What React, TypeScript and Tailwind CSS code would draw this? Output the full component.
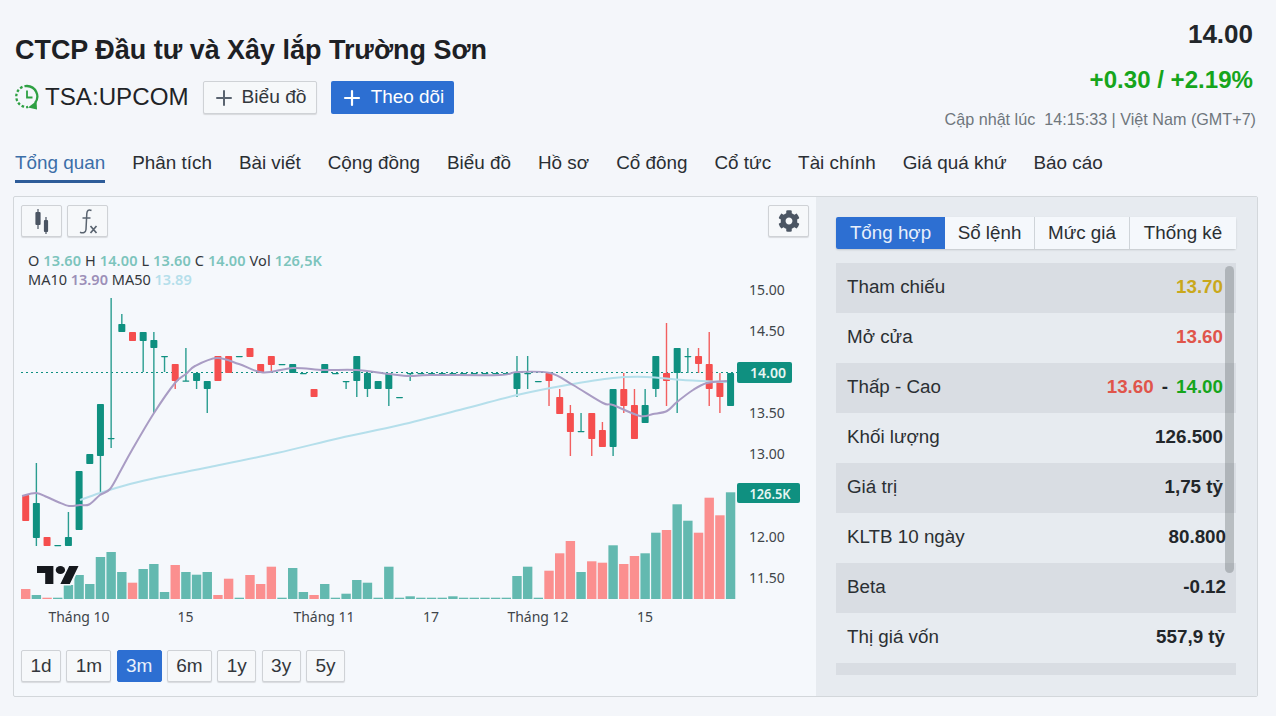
import { Plus } from "lucide-react";
import { FaCog } from "react-icons/fa";

type C = [string, number, number, number, number];
const G = "g", R = "r";
// colour, wick top, wick bottom, body top, body bottom (page px)
const candles: C[] = [
  [R,495,521,495,521],[G,463,546,503,538],[R,537,546,537,546],[G,545,545,545,545.5],[G,512,546,537,546],
  [G,471,530,471,530],[G,454,464,454,464],[G,404,495,404,456],[G,298,448,438,438.5],[G,314,332,324,332],
  [R,332,341,332,341],[G,332,372,332,341],[G,332,413,340,348],[G,356,372,356,356.5],[R,364,389,364,381],
  [G,348,381,380.5,381],[G,373,389,373,381],[G,381,413,381,389],[R,356,381,356,381],[R,356,373,356,373],
  [G,356,356,356,356.5],[R,348,357,348,357],[R,364,373,364,373],[R,356,372,356,365],[G,364,364,364,364.5],
  [G,364,373,364,373],[G,373,373,373,373.5],[R,389,397,389,397],[G,364,373,364,373],[G,373,373,373,373.5],
  [G,381,389,381,381.5],[G,356,397,356,381],[G,373,397,373,389],[G,381,389,381,389],[G,373,406,373,389],
  [G,397,397,397,397.5],[G,373,381,373,373.5],[G,373,373,373,373.5],[G,373,373,373,373.5],[G,373,373,373,373.5],
  [G,373,373,373,373.5],[G,373,373,373,373.5],[G,373,373,373,373.5],[G,373,373,373,373.5],[G,373,373,373,373.5],
  [G,373,373,373,373.5],[G,356,397,373,389],[G,356,389,373,373.5],[G,381,381,381,381.5],[R,373,406,373,381],
  [R,389,414,397,414],[R,405,456,413,432],[G,413,431,431,431.5],[R,413,456,413,439],[R,422,447,430,447],
  [G,389,456,389,447],[R,373,413,389,406],[R,389,439,405,439],[G,389,423,405,423],[G,356,397,356,389],
  [R,323,406,373,381],[G,348,413,348,373],[G,348,373,356,356.5],[R,348,373,356,364],[R,332,406,364,389],
  [R,373,413,381,397],[G,373,406,373,406],
];
const volTops = [589,595,597.7,597.7,585,575,584,557,552,572,582.7,569,564,592,565,572,574.7,572,595,578.7,597.7,575,584,566.7,597.7,568,592,595,584,597.7,593.7,580,582.7,597.7,566.7,597.7,596.3,597.7,597.7,597.7,596.3,597.7,597.7,597.7,597.7,597.7,576,566.7,597.7,570.7,553.3,541,572,561.3,562.7,545.3,564,556,553.3,532.7,530,504.3,520.7,532.7,497.7,515.3,492.3];
const xOf = (i: number) => 25.7 + i * 10.68;

const smooth = (p: number[][]) => {
  let d = `M${p[0][0]} ${p[0][1]}`;
  for (let i = 0; i < p.length - 1; i++) {
    const a = p[Math.max(0, i - 1)], b = p[i], c = p[i + 1], e = p[Math.min(p.length - 1, i + 2)];
    d += ` C${b[0] + (c[0] - a[0]) / 6} ${b[1] + (c[1] - a[1]) / 6} ${c[0] - (e[0] - b[0]) / 6} ${c[1] - (e[1] - b[1]) / 6} ${c[0]} ${c[1]}`;
  }
  return d;
};
const ma10 = [[22,496],[36,493],[47,497],[58,502],[69,506],[80,505],[89,504.5],[100,495],[110,489],[121,470],[132,450],[154,413],[175,383],[186,374],[195,366],[217,358],[239,364],[263,372.5],[293,368],[324,370],[356,370],[389,374],[410,376],[430,375],[500,375],[517,372],[550,373],[573,385],[603,403],[613,405],[640,416],[653,414],[667,411],[677,402],[693,390],[707,383],[727,381]];
const ma50 = [[80,500],[100,493],[130,484],[160,477],[210,467],[277,453],[340,438],[400,425],[467,408],[517,395],[567,385],[613,378],[647,377],[683,380],[727,382]];

const axisY: [string, number][] = [["15.00",289.5],["14.50",331],["13.50",412.5],["13.00",454],["12.00",536.5],["11.50",577.5]];
const axisX: [string, number][] = [["Tháng 10",79],["15",185.5],["Tháng 11",324],["17",431],["Tháng 12",538],["15",645]];

const Tab = ({ t, a }: { t: string; a?: boolean }) => (
  <div className={a ? "h-[36px] leading-[32px] text-[#3b6ea8] border-b-[3px] border-[#2e5c99]" : "h-[36px] leading-[32px] text-[#2a2e33]"}>{t}</div>
);

const Range = ({ t, w, a }: { t: string; w: string; a?: boolean }) => (
  <div className={`${w} h-[32px] flex items-center justify-center rounded-[2px] text-[19px] border ${a ? "bg-[#2d6fd2] border-[#2d6fd2] text-[#e8f0fb]" : "bg-[#f6f8fa] border-[#cfd2d6] text-[#33373c] shadow-[0_1px_1px_rgba(0,0,0,0.12)]"}`}>{t}</div>
);

const Row = ({ l, dark, children, shift }: { l: string; dark?: boolean; children: React.ReactNode; shift?: string }) => (
  <div className={`h-[50px] flex items-center justify-between pl-[11px] pr-[13px] pb-[1px] text-[18.8px] ${dark ? "bg-[#d9dde3]" : ""}`}>
    <span className="text-[#2b2f33]">{l}</span>
    <span className={`font-bold text-[#22262a] ${shift ?? ""}`}>{children}</span>
  </div>
);

export default function App() {
  return (
    <div className="w-[1276px] h-[716px] overflow-hidden bg-[#f4f6fa] font-['Liberation_Sans',sans-serif]">
      <div className="h-[147px] pl-[15px] pr-[20px] flex justify-between">
        <div>
          <h1 className="pt-[34px] text-[26.95px] leading-[32px] font-bold text-[#1d2024]">CTCP Đầu tư và Xây lắp Trường Sơn</h1>
          <div className="mt-[15px] flex items-center h-[33px]">
            <svg width="24" height="26" viewBox="0 0 24 26" fill="none" stroke="#2ea043" strokeWidth="2.3" className="mb-[2px]">
              <path d="M12 2a10.5 10.5 0 0 1 8 17" />
              <path d="M12 2A10.5 10.5 0 0 0 3.5 19a10.5 10.5 0 0 0 9.5 4" strokeDasharray="2.6 2" />
              <path d="M12 6.5v7h5.5" strokeWidth="1.8" />
              <path d="M21.5 17l.5 8.5-9-2z" fill="#2ea043" stroke="none" />
            </svg>
            <span className="ml-[6px] text-[24.15px] text-[#1f2327]">TSA:UPCOM</span>
            <div className="ml-[14px] w-[114px] h-[33px] flex items-center justify-center gap-[5px] rounded-[2px] border border-[#cfd2d6] bg-[#f6f8fa] shadow-[0_1px_1px_rgba(0,0,0,0.12)] text-[19.2px] text-[#33373c]">
              <Plus size={24} color="#5a6470" strokeWidth={2} />
              <span className="pb-[1px]">Biểu đồ</span>
            </div>
            <div className="ml-[14px] w-[123px] h-[33px] flex items-center justify-center gap-[7px] rounded-[2px] bg-[#2d6fd2] text-[18.9px] text-white">
              <Plus size={24} color="#fff" strokeWidth={2.2} />
              <span className="pb-[1px]">Theo dõi</span>
            </div>
          </div>
        </div>
        <div className="flex flex-col items-end">
          <div className="pt-[19px] text-[26px] leading-[30px] font-bold text-[#22262a] pr-[3px]">14.00</div>
          <div className="mt-[18px] text-[24.1px] leading-[26px] font-bold text-[#16a51c] pr-[3px]">+0.30 / +2.19%</div>
          <div className="mt-[16px] text-[16.16px] leading-[20px] text-[#6f767d]">Cập nhật lúc&nbsp; 14:15:33 | Việt Nam (GMT+7)</div>
        </div>
      </div>
      <div className="pl-[15px] flex gap-[27px] text-[18.86px]">
        <Tab t="Tổng quan" a />
        <Tab t="Phân tích" /><Tab t="Bài viết" /><Tab t="Cộng đồng" /><Tab t="Biểu đồ" /><Tab t="Hồ sơ" /><Tab t="Cổ đông" /><Tab t="Cổ tức" /><Tab t="Tài chính" /><Tab t="Giá quá khứ" /><Tab t="Báo cáo" />
      </div>

      <div className="mt-[13px] ml-[13px] w-[1245px] h-[501px] flex rounded-[2px] border border-[#d3d7db] bg-[#f5f8fc]">
        <div className="w-[802px] shrink-0">
          <div className="pt-[8px] pl-[7px] pr-[7px] flex justify-between">
            <div className="flex gap-[5px]">
              <div className="w-[41px] h-[32px] flex items-center justify-center rounded-[2px] border border-[#cfd2d6] bg-[#f6f8fa] shadow-[0_1px_1px_rgba(0,0,0,0.12)]">
                <svg width="16" height="26" viewBox="0 0 16 26" fill="#4b5563" stroke="#4b5563" strokeWidth="1.2">
                  <path d="M4 1v20M12 9v17" fill="none" />
                  <rect x="2" y="4.5" width="4" height="12" rx="0.5" />
                  <rect x="10.5" y="12.5" width="3" height="11" rx="0.5" />
                </svg>
              </div>
              <div className="w-[41px] h-[32px] flex items-center justify-center rounded-[2px] border border-[#cfd2d6] bg-[#f6f8fa] shadow-[0_1px_1px_rgba(0,0,0,0.12)]">
                <svg width="22" height="27" viewBox="0 0 22 27" fill="none" stroke="#5a6470" strokeWidth="1.5">
                  <path d="M14.5 2.5C11.5 1 10 2.5 9.8 5.5L9 21.5c-0.2 3-3 4-6 2.7" />
                  <path d="M5.5 10h8" />
                  <path d="M13.5 18l6 7M19.5 18l-6 7" strokeWidth="1.7" />
                </svg>
              </div>
            </div>
            <div className="w-[41px] h-[32px] flex items-center justify-center rounded-[2px] border border-[#cfd2d6] bg-[#f6f8fa] shadow-[0_1px_1px_rgba(0,0,0,0.12)]">
              <FaCog size={22} color="#4b5563" />
            </div>
          </div>
          <div className="relative mt-[8px] h-[385px]">
            <svg width="802" height="385" viewBox="14 245 802 385" className="block">
              <g fontFamily="'Noto Sans', sans-serif" fontSize="14" fill="#40454a" textAnchor="middle">
                {axisY.map(([t, y]) => <text key={t} x="767" y={y + 5}>{t}</text>)}
                {axisX.map(([t, x]) => <text key={t + x} x={x} y="622">{t}</text>)}
              </g>
              {volTops.map((t, i) => {
                const red = candles[i][0] === R;
                return <rect key={i} x={xOf(i) - 4.7} y={t} width="9.4" height={599 - t} fill={red ? "#fb8f8f" : "#63b9b0"} />;
              })}
              <line x1="21" x2="737" y1="372.5" y2="372.5" stroke="#0f9080" strokeWidth="1.2" strokeDasharray="2 3" />
              {candles.map(([c, wt, wb, bt, bb], i) => {
                const col = c === R ? "#f54e4e" : "#0f9080";
                const x = xOf(i);
                return (
                  <g key={i}>
                    <rect x={x - 0.7} y={wt} width="1.4" height={wb - wt} fill={c === R ? "#f26060" : "#2a9d90"} />
                    <rect x={x - 3.5} y={bt} width="7" height={Math.max(bb - bt, 1.2)} rx="0.8" fill={col} />
                  </g>
                );
              })}
              <path d={smooth(ma50)} fill="none" stroke="#b5dfeb" strokeWidth="2" />
              <path d={smooth(ma10)} fill="none" stroke="#a99cc4" strokeWidth="2" />
              <g transform="translate(37 562) scale(1.17 1)">
                <path d="M14 22H7V11H0V4h14v18zM28 22h-8l7.5-18h8L28 22z" fill="#fff" stroke="#f5f8fc" strokeWidth="3" />
                <circle cx="20" cy="8" r="4" fill="#fff" stroke="#f5f8fc" strokeWidth="3" />
                <path d="M14 22H7V11H0V4h14v18zM28 22h-8l7.5-18h8L28 22z" fill="#15181d" />
                <circle cx="20" cy="8" r="4" fill="#15181d" />
              </g>
              <rect x="737" y="362" width="55" height="21" rx="2" fill="#0f9080" />
              <text x="768" y="378" textAnchor="middle" fontFamily="'Noto Sans', sans-serif" fontSize="14" fontWeight="600" fill="#e6f5f2" textLength="36" lengthAdjust="spacingAndGlyphs">14.00</text>
              <rect x="737" y="483" width="63" height="20" rx="2" fill="#0f9080" />
              <text x="770" y="498.5" textAnchor="middle" fontFamily="'Noto Sans', sans-serif" fontSize="14" fontWeight="600" fill="#e6f5f2" textLength="41" lengthAdjust="spacingAndGlyphs">126.5K</text>
            </svg>
            <div className="absolute left-[14px] top-[6px] text-[14.5px] leading-[19px] text-[#33373c] font-['Noto_Sans',sans-serif]">
              <div className="tracking-[0.12px]">O <b className="font-semibold text-[#7cc4bc]">13.60</b> H <b className="font-semibold text-[#7cc4bc]">14.00</b> L <b className="font-semibold text-[#7cc4bc]">13.60</b> C <b className="font-semibold text-[#7cc4bc]">14.00</b> Vol <b className="font-semibold text-[#7cc4bc]">126,5K</b></div>
              <div>MA10 <b className="font-semibold text-[#9c8fb8]">13.90</b> MA50 <b className="font-semibold text-[#b5dfeb]">13.89</b></div>
            </div>
          </div>
          <div className="mt-[20px] pl-[7px] flex gap-[5.33px]">
            <Range t="1d" w="w-[40px]" /><Range t="1m" w="w-[45px]" /><Range t="3m" w="w-[45px]" a /><Range t="6m" w="w-[45px]" /><Range t="1y" w="w-[39px]" /><Range t="3y" w="w-[39px]" /><Range t="5y" w="w-[39px]" />
          </div>
        </div>

        <div className="flex-1 bg-[#e7ebf0] pl-[20px] pr-[21px] pt-[20px]">
          <div className="flex h-[32px] text-[18.8px] text-[#2b2f33] rounded-[2px] shadow-[0_1px_2px_rgba(0,0,0,0.15)]">
            <div className="w-[109px] flex items-center justify-center bg-[#2d6fd2] text-[#e8f0fb] rounded-l-[2px]">Tổng hợp</div>
            <div className="w-[90px] flex items-center justify-center bg-[#f5f8fc] border-r border-[#cfd4d9]">Sổ lệnh</div>
            <div className="w-[95px] flex items-center justify-center bg-[#f5f8fc] border-r border-[#cfd4d9]">Mức giá</div>
            <div className="w-[106px] flex items-center justify-center bg-[#f5f8fc]">Thống kê</div>
          </div>
          <div className="relative mt-[14px] h-[412px] overflow-hidden">
            <Row l="Tham chiếu" dark><span className="text-[#c9a81c]">13.70</span></Row>
            <Row l="Mở cửa"><span className="text-[#e0554b]">13.60</span></Row>
            <Row l="Thấp - Cao" dark><span className="text-[#e0554b]">13.60</span><span className="mx-[8px]">-</span><span className="text-[#16a51c]">14.00</span></Row>
            <Row l="Khối lượng">126.500</Row>
            <Row l="Giá trị" dark>1,75 tỷ</Row>
            <Row l="KLTB 10 ngày" shift="mr-[-3px]">80.800</Row>
            <Row l="Beta" dark shift="mr-[-3px]">-0.12</Row>
            <Row l="Thị giá vốn" shift="mr-[-2px]">557,9 tỷ</Row>
            <div className="h-[12px] bg-[#d9dde3]" />
            <div className="absolute right-[2px] top-[3px] w-[9px] h-[307px] rounded-full bg-[rgba(80,85,90,0.3)]" />
          </div>
        </div>
      </div>
    </div>
  );
}
